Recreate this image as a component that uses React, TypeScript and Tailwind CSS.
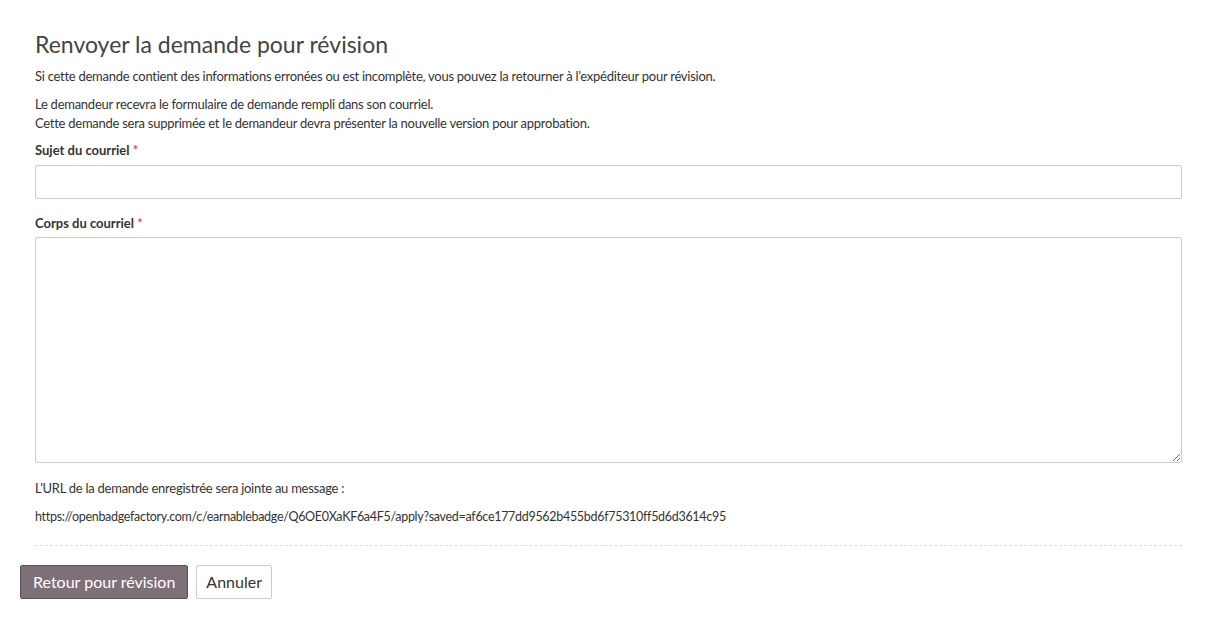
export default function App() {
  return (
    <div className="min-h-screen bg-white px-[20px] pt-[31px] text-[#333333]" style={{ fontFamily: "Lato, 'Liberation Sans', sans-serif" }}>
      <div className="px-[15px]">
        <h3 className="text-[23px] leading-[26px] font-normal text-[#444444]">Renvoyer la demande pour révision</h3>
        <p className="mt-[10px] text-[13px] leading-[19px] tracking-[-0.26px]">
          Si cette demande contient des informations erronées ou est incomplète, vous pouvez la retourner à l’expéditeur pour révision.
        </p>
        <p className="mt-[9px] text-[13px] leading-[19px] tracking-[-0.26px]">
          Le demandeur recevra le formulaire de demande rempli dans son courriel.
          <br />
          Cette demande sera supprimée et le demandeur devra présenter la nouvelle version pour approbation.
        </p>
        <label className="mt-[8px] block text-[13px] leading-[19px] font-bold">
          Sujet du courriel <span className="text-[#d9534f]">*</span>
        </label>
        <input type="text" className="mt-[4.5px] block h-[34px] w-full border border-[#cccccc] rounded-[2px] px-3 text-[13px] outline-none" />
        <label className="mt-[15px] block text-[13px] leading-[19px] font-bold">
          Corps du courriel <span className="text-[#d9534f]">*</span>
        </label>
        <textarea className="mt-[4.5px] block h-[226px] w-full border border-[#cccccc] rounded-[2px] px-3 py-2 text-[13px] outline-none" />
        <p className="mt-[16px] text-[13px] leading-[19px] tracking-[-0.26px]">L'URL de la demande enregistrée sera jointe au message :</p>
        <p className="mt-[9px] text-[12.5px] leading-[19px] tracking-[-0.3px]">
          https://openbadgefactory.com/c/earnablebadge/Q6OE0XaKF6a4F5/apply?saved=af6ce177dd9562b455bd6f75310ff5d6d3614c95
        </p>
        <div className="mt-[19px] border-t border-dashed border-[#dddddd]" />
      </div>
      <div className="mt-[19px] flex gap-[8px]">
        <button className="h-[34px] px-[12px] rounded-[2px] border border-[#5e5258] bg-[#7e7078] text-[16px] text-white">
          Retour pour révision
        </button>
        <button className="h-[34px] px-[9px] rounded-[2px] border border-[#cccccc] bg-white text-[16px] text-[#333333]">
          Annuler
        </button>
      </div>
    </div>
  );
}
